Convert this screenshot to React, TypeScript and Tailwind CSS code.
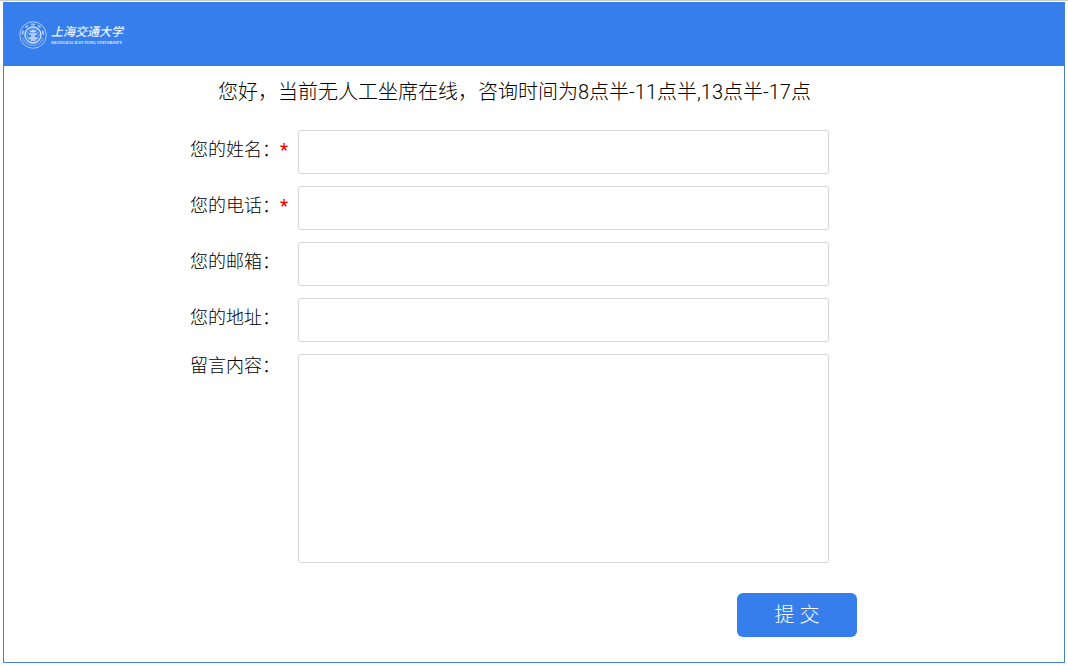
import React, { useState } from "react";

const FIELDS = [
  { id: "name", label: "您的姓名：", type: "text", required: true },
  { id: "phone", label: "您的电话：", type: "tel", required: true },
  { id: "email", label: "您的邮箱：", type: "email", required: false },
  { id: "address", label: "您的地址：", type: "text", required: false },
];

function Emblem() {
  return (
    <svg viewBox="0 0 56 56" className="size-7 shrink-0" fill="none" stroke="#d5e5fc" aria-hidden="true">
      <circle cx="28" cy="28" r="26.5" strokeWidth="1.8" opacity="0.8" />
      <path d="M7 27a21 21 0 0 1 2-8M13 13l5-4M24 7h8M38 9l5 4M47 19l2 8" strokeWidth="4" opacity="0.65" />
      <path d="M8 34a21 21 0 0 0 40 0" strokeWidth="3" strokeDasharray="2.4 1.8" opacity="0.6" />
      <circle cx="28" cy="28" r="16" strokeWidth="2.6" />
      {/* anvil and books inside the gear */}
      <circle cx="28" cy="28" r="11.5" strokeWidth="3" strokeDasharray="2.6 2.3" opacity="0.5" />
      <path d="M28 17v6M22 21h12M20 26h16M24 30h8" strokeWidth="3" />
      <path d="M19 34h18M23 38h10" strokeWidth="2.6" />
    </svg>
  );
}

function Logo() {
  return (
    <a href="#" className="flex items-center gap-1 text-[#eaf2fe]">
      <Emblem />
      <span className="flex flex-col">
        <span className="text-[12px] leading-4 font-medium italic">上海交通大学</span>
        <span className="font-['Liberation_Serif',serif] font-bold text-[4px] leading-[6px] whitespace-nowrap">
          SHANGHAI JIAO TONG UNIVERSITY
        </span>
      </span>
    </a>
  );
}

export default function App() {
  const [values, setValues] = useState<Record<string, string>>({});

  const update = (id: string, value: string) => setValues(p => ({ ...p, [id]: value }));

  return (
    <div className="min-h-screen bg-white border-t border-[#c9cbcd] pt-px px-[3px] pb-[3px] flex flex-col font-['Roboto','Noto_Sans_CJK_SC',sans-serif] font-light text-black">
      <div className="flex-1 flex flex-col border border-t-0 border-[#4480cb]">

        {/* HEADER */}
        <header className="h-16 shrink-0 bg-[#377eed] flex items-center px-[15px] pt-0.5">
          <Logo />
        </header>

        {/* MESSAGE FORM */}
        <form
          className="w-full max-w-[688px] mx-auto pt-3"
          onSubmit={e => e.preventDefault()}
        >
          <h1 className="pl-7 text-[20px] leading-7 whitespace-nowrap">
            您好，当前无人工坐席在线，咨询时间为8点半-11点半,13点半-17点
          </h1>

          <div className="mt-6 pr-[49px] flex flex-col gap-3">
            {FIELDS.map(f => (
              <div key={f.id} className="flex items-start">
                <label htmlFor={f.id} className="w-[108px] shrink-0 text-[18px] leading-10 whitespace-nowrap">
                  {f.label}
                  {f.required && <span className="font-medium text-[#f00]">*</span>}
                </label>
                <input
                  id={f.id}
                  type={f.type}
                  required={f.required}
                  value={values[f.id] ?? ""}
                  onChange={e => update(f.id, e.target.value)}
                  className="flex-1 min-w-0 h-11 px-3 text-[18px] border border-[#d5d5d5] rounded-[3px] outline-none focus:border-[#377eed]"
                />
              </div>
            ))}

            <div className="flex items-start">
              <label htmlFor="content" className="w-[108px] shrink-0 text-[18px] leading-6">
                留言内容：
              </label>
              <textarea
                id="content"
                value={values.content ?? ""}
                onChange={e => update("content", e.target.value)}
                className="flex-1 min-w-0 h-[209px] px-3 py-2 text-[18px] border border-[#d5d5d5] rounded-[3px] outline-none resize-none focus:border-[#377eed]"
              />
            </div>
          </div>

          <div className="mt-[30px] pr-[21px] flex justify-end">
            <button
              type="submit"
              className="w-[120px] h-11 rounded-md bg-[#377eed] text-white text-[20px] leading-7 cursor-pointer"
            >
              提 交
            </button>
          </div>
        </form>

      </div>
    </div>
  );
}
